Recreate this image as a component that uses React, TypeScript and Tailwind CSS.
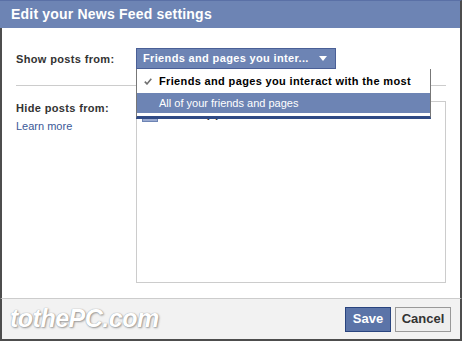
const font = { fontFamily: '"Liberation Sans", Arial, sans-serif' };

function CheckMark() {
  return (
    <svg width="8" height="7" viewBox="0 0 8 7" className="block">
      <path d="M0.8 3.6 L3 5.9 L7.3 0.8" fill="none" stroke="#6f6f6f" strokeWidth="1.6" />
    </svg>
  );
}

function ShowFromDropdown() {
  return (
    <div className="relative">
      <div className="flex h-[21px] w-[200px] items-center justify-between border border-[#4a5f96] bg-[#6d84b4] pl-[6px] pr-[8px]">
        <span className="text-[11px] font-bold tracking-[0.35px] text-white">Friends and pages you inter...</span>
        <svg width="8" height="5" viewBox="0 0 8 5" className="block">
          <path d="M0 0 H8 L4 5 Z" fill="#ffffff" />
        </svg>
      </div>
      <div className="absolute left-0 top-full z-10 w-[295px] border-x border-[#777777] border-b-[3px] border-b-[#2f4a85] bg-white">
        <div className="flex h-[24px] items-center pl-[7px] pt-[1px]">
          <CheckMark />
          <span className="ml-[7px] text-[11px] font-bold tracking-[0.35px] text-black">
            Friends and pages you interact with the most
          </span>
        </div>
        <div className="flex h-[20px] items-center bg-[#6d84b4] pl-[22px] text-[11px] text-white">
          All of your friends and pages
        </div>
        <div className="h-[3px]" />
      </div>
    </div>
  );
}

export default function App() {
  return (
    <div className="flex h-[341px] w-[462px] flex-col bg-white" style={font}>
      <div className="flex h-[28px] shrink-0 items-center border-t border-[#5a70a6] border-r-2 border-r-[#4d4d4d] bg-[#6d84b4] pl-[11px]">
        <h1 className="text-[14px] font-bold tracking-[0.2px] text-white">Edit your News Feed settings</h1>
      </div>

      <div className="flex flex-1 flex-col border-x-2 border-[#4d4d4d] px-[14px] pt-[20px]">
        <div className="flex items-center">
          <div className="w-[120px] pt-[2px] text-[11px] font-bold tracking-[0.35px] text-[#333333]">
            Show posts from:
          </div>
          <ShowFromDropdown />
        </div>

        <div className="mt-[16px] h-px bg-[#cccccc]" />

        <div className="mt-[15px] flex">
          <div className="w-[120px]">
            <div className="text-[11px] leading-[14px] font-bold tracking-[0.35px] text-[#333333]">
              Hide posts from:
            </div>
            <div className="mt-[4px] text-[11px] leading-[14px] text-[#3b5998]">Learn more</div>
          </div>
          <div className="h-[182px] flex-1 border border-[#cccccc] bg-white">
            <div className="flex items-center pl-[5px] pt-[4px]">
              <div className="h-[16px] w-[16px] border border-[#6d84b4] bg-[#9aaad0]" />
              <span className="ml-[5px] text-[11px] font-bold text-[#333333]">Friends (3)</span>
            </div>
          </div>
        </div>
      </div>

      <div className="flex h-[43px] shrink-0 items-center justify-between border-x-2 border-b-2 border-t border-[#4d4d4d] border-t-[#cccccc] bg-[#f2f2f2] pl-[8px] pr-[9px]">
        <span className="text-[25px] font-bold italic tracking-[-0.5px] text-white [text-shadow:0_0_1px_#8a8a8a,1px_1px_2px_#9a9a9a]">
          tothePC.com
        </span>
        <div className="flex gap-[4px]">
          <button className="h-[25px] w-[46px] border border-[#29447e] bg-[#5b74a8] text-[13px] font-bold text-white">
            Save
          </button>
          <button className="h-[25px] w-[56px] border border-[#999999] bg-[#eeeeee] text-[13px] font-bold text-[#333333]">
            Cancel
          </button>
        </div>
      </div>
    </div>
  );
}
